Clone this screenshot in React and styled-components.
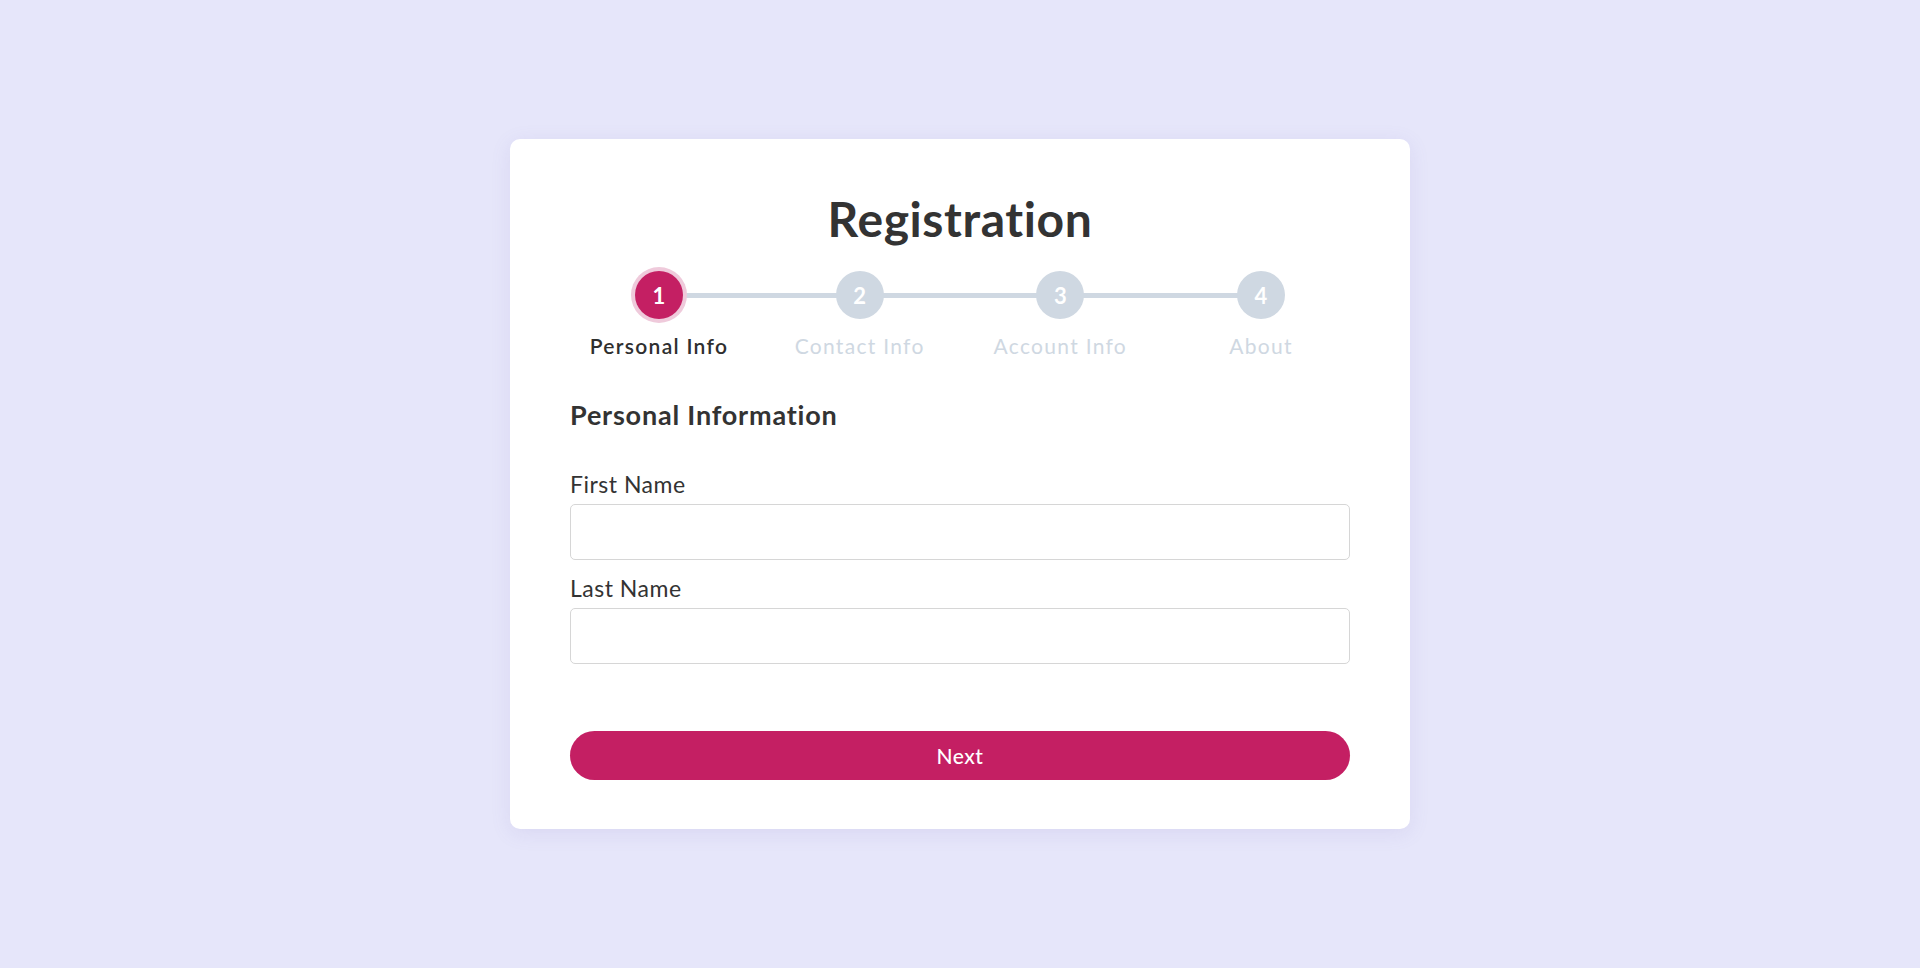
import styled, { createGlobalStyle } from 'styled-components';

const GlobalStyle = createGlobalStyle`
  * {
    box-sizing: border-box;
  }
  body {
    margin: 0;
    background: #e6e6fa;
    font-family: Lato, 'Open Sans', sans-serif;
    color: #333;
  }
`;

const Page = styled.div`
  min-height: 100vh;
  display: flex;
  align-items: center;
  justify-content: center;
`;

const Card = styled.div`
  width: 900px;
  background: #fff;
  border-radius: 10px;
  padding: 50px 60px 49px;
  box-shadow: 0 4px 20px rgba(120, 110, 190, 0.12);
  display: flex;
  flex-direction: column;
`;

const Title = styled.h1`
  margin: 0;
  text-align: center;
  font-size: 48px;
  line-height: 60px;
  letter-spacing: 0.6px;
  font-weight: 700;
  color: #333;
`;

const Steps = styled.div`
  position: relative;
  display: flex;
  justify-content: space-between;
  margin-top: 22px;

  &::before {
    content: '';
    position: absolute;
    left: 89px;
    right: 89px;
    top: 22px;
    height: 5px;
    background: #cfd8e2;
  }
`;

const Step = styled.div`
  position: relative;
  width: 178px;
  display: flex;
  flex-direction: column;
  align-items: center;
`;

const Dot = styled.div`
  width: 48px;
  height: 48px;
  border-radius: 50%;
  display: flex;
  align-items: center;
  justify-content: center;
  font-size: 22px;
  font-weight: 700;
  color: #fff;
  background: ${(p) => (p.$active ? '#c41f63' : '#cfd8e2')};
  box-shadow: ${(p) => (p.$active ? '0 0 0 4px #efcadb' : 'none')};
`;

const StepLabel = styled.div`
  margin-top: 15px;
  font-size: 21px;
  line-height: 24px;
  letter-spacing: 1.3px;
  font-weight: ${(p) => (p.$active ? 600 : 400)};
  color: ${(p) => (p.$active ? '#2f2f2f' : '#cfd8e2')};
  white-space: nowrap;
`;

const Section = styled.h2`
  margin: 41px 0 0;
  font-size: 27px;
  line-height: 32px;
  letter-spacing: 0.8px;
  font-weight: 700;
  color: #333;
`;

const Fields = styled.div`
  margin-top: 39px;
  display: flex;
  flex-direction: column;
  gap: 14px;
`;

const Field = styled.label`
  display: flex;
  flex-direction: column;
  gap: 6px;
`;

const FieldLabel = styled.span`
  font-size: 23px;
  line-height: 28px;
  letter-spacing: 0.5px;
  color: #333;
`;

const Input = styled.input`
  height: 56px;
  width: 100%;
  border: 1px solid #d6d6d6;
  border-radius: 5px;
  padding: 0 14px;
  font: inherit;
  font-size: 18px;
  outline: none;
`;

const Button = styled.button`
  margin-top: 67px;
  height: 49px;
  border: none;
  border-radius: 25px;
  background: #c41f63;
  color: #fff;
  font-family: inherit;
  font-size: 21px;
  letter-spacing: 0.5px;
  font-weight: 500;
  cursor: pointer;
`;

const steps = ['Personal Info', 'Contact Info', 'Account Info', 'About'];

export default function App() {
  return (
    <Page>
      <GlobalStyle />
      <Card>
        <Title>Registration</Title>
        <Steps>
          {steps.map((s, i) => (
            <Step key={s}>
              <Dot $active={i === 0}>{i + 1}</Dot>
              <StepLabel $active={i === 0}>{s}</StepLabel>
            </Step>
          ))}
        </Steps>
        <Section>Personal Information</Section>
        <Fields>
          <Field>
            <FieldLabel>First Name</FieldLabel>
            <Input type="text" />
          </Field>
          <Field>
            <FieldLabel>Last Name</FieldLabel>
            <Input type="text" />
          </Field>
        </Fields>
        <Button>Next</Button>
      </Card>
    </Page>
  );
}
